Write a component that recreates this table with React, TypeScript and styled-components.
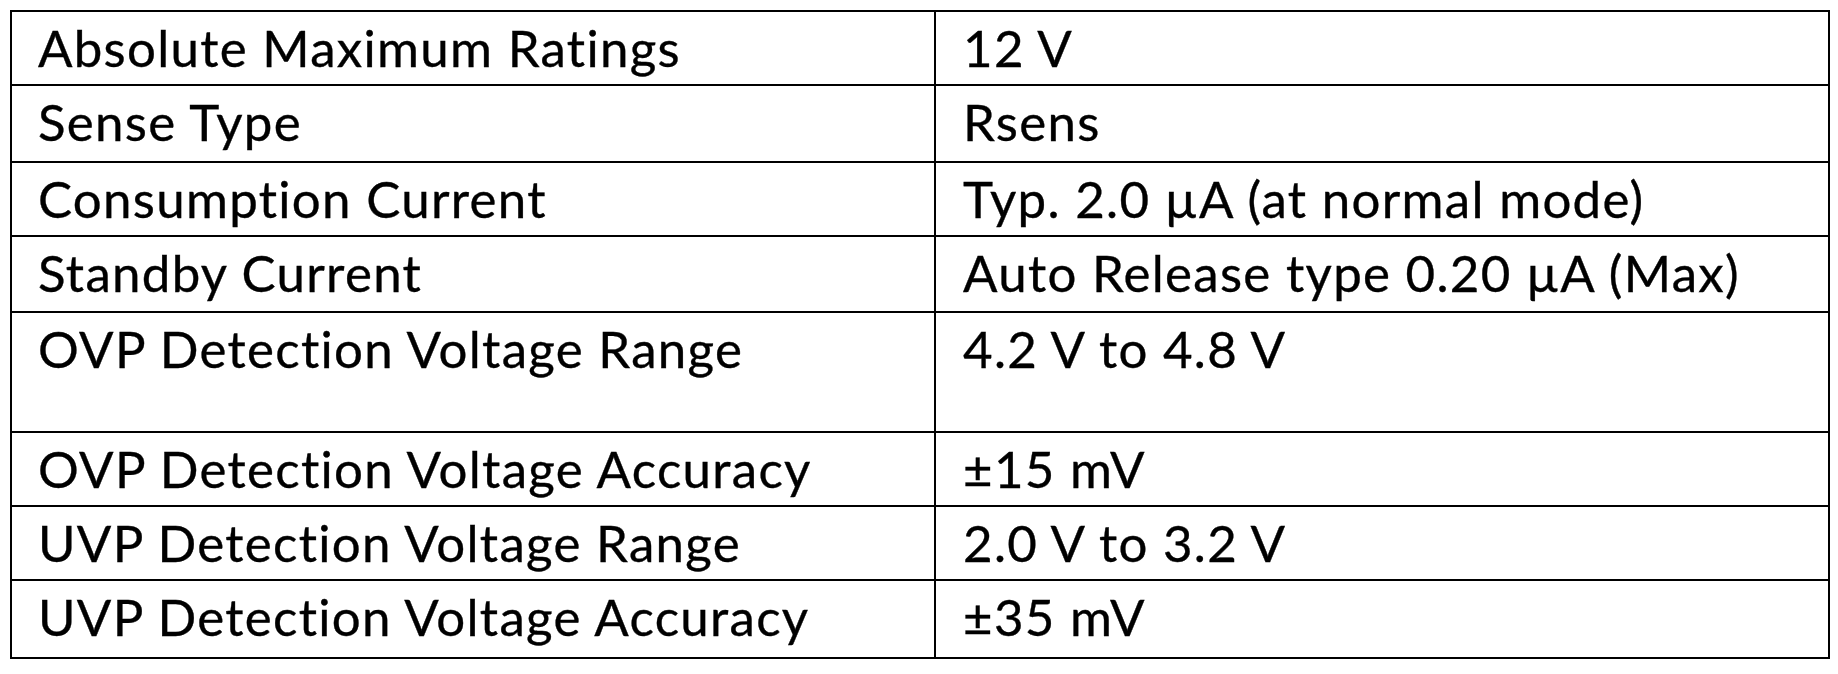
import React from "react";
import styled, { createGlobalStyle } from "styled-components";

const GlobalStyle = createGlobalStyle`
  html, body {
    margin: 0;
    padding: 0;
    background: #ffffff;
  }
  body {
    font-family: Lato, "Open Sans", "Liberation Sans", sans-serif;
    color: #000000;
  }
`;

const Page = styled.div`
  padding: 10px 0 0 10px;
  width: 1838px;
  height: 674px;
  box-sizing: border-box;
  background: #ffffff;
`;

const Table = styled.div`
  display: grid;
  grid-template-columns: 924px 894px;
  width: 1820px;
  box-sizing: border-box;
  border-top: 2px solid #000;
  border-left: 2px solid #000;
`;

const Cell = styled.div<{ $h: number; $pad: number }>`
  box-sizing: border-box;
  height: ${(p) => p.$h}px;
  border-right: 2px solid #000;
  border-bottom: 2px solid #000;
  padding: 5px 0 0 ${(p) => p.$pad}px;
  font-size: 51px;
  line-height: 1.2;
  letter-spacing: 1.3px;
  font-variant-ligatures: none;
  -webkit-text-stroke: 0.35px #000;
  white-space: nowrap;
  overflow: hidden;
`;

const rows: { label: string; value: string; h: number }[] = [
  { label: "Absolute Maximum Ratings", value: "12 V", h: 74 },
  { label: "Sense Type", value: "Rsens", h: 77 },
  { label: "Consumption Current", value: "Typ. 2.0 µA (at normal mode)", h: 74 },
  { label: "Standby Current", value: "Auto Release type 0.20 µA (Max)", h: 76 },
  { label: "OVP Detection Voltage Range", value: "4.2 V to 4.8 V", h: 120 },
  { label: "OVP Detection Voltage Accuracy", value: "±15 mV", h: 74 },
  { label: "UVP Detection Voltage Range", value: "2.0 V to 3.2 V", h: 74 },
  { label: "UVP Detection Voltage Accuracy", value: "±35 mV", h: 78 },
];

export default function App() {
  return (
    <>
      <GlobalStyle />
      <Page>
        <Table>
          {rows.map((r) => (
            <React.Fragment key={r.label}>
              <Cell $h={r.h} $pad={26}>{r.label}</Cell>
              <Cell $h={r.h} $pad={27}>{r.value}</Cell>
            </React.Fragment>
          ))}
        </Table>
      </Page>
    </>
  );
}
